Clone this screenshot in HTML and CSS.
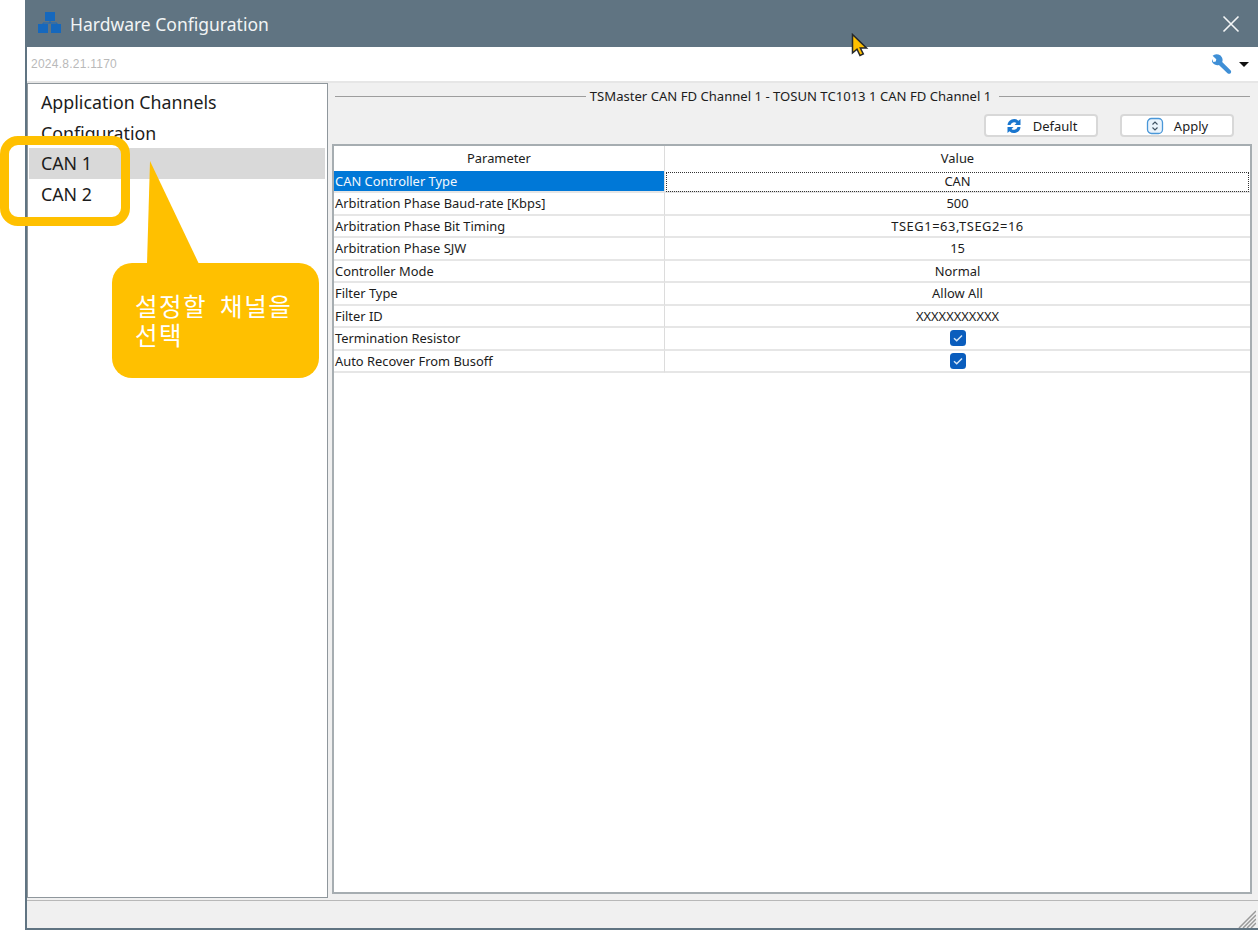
FILE: index.html
```html
<!DOCTYPE html>
<html lang="en">
<head>
<meta charset="utf-8">
<title>Hardware Configuration</title>
<link rel="stylesheet" href="styles.css">
</head>
<body>
<div class="window">
  <header class="titlebar">
    <svg class="logo" width="24" height="22" viewBox="0 0 24 22"><rect x="7" y="0" width="10" height="9" fill="#1668bd"/><rect x="0" y="12" width="10" height="9" fill="#1668bd"/><rect x="13" y="12" width="10" height="9" fill="#1668bd"/><path d="M12 8v3M5 13v-2h14v2" stroke="#1668bd" fill="none"/></svg>
    <span class="title">Hardware Configuration</span>
    <svg class="close" width="18" height="18" viewBox="0 0 18 18"><path d="M1.5 1.5l15 15M16.5 1.5l-15 15" stroke="#f4f6f7" stroke-width="1.6" fill="none"/></svg>
  </header>
  <div class="toolbar">
    <span class="version">2024.8.21.1170</span>
    <svg class="wrench" width="20" height="20" viewBox="0 0 20 20"><path d="M6.5 0.6a5.6 5.6 0 0 0-5.9 1.2l3.7 3.4-.5 2.3-2.4.5L-.2 4.6a5.6 5.6 0 0 0 7.1 6.4l8.6 8.2c.9.8 2.3.8 3.1 0 .8-.9.7-2.2-.1-3L10.200 8a5.600 5.600 0 0 0-3.700-7.400z" fill="#3f8fd6"/></svg>
    <span class="caret"></span>
  </div>
  <main class="body">
    <nav class="tree">
      <div class="tree-row">Application Channels</div>
      <div class="tree-row">Configuration</div>
      <div class="tree-row selected">CAN 1</div>
      <div class="tree-row">CAN 2</div>
    </nav>
    <section class="pane">
      <div class="group-title"><span class="rule"></span><span class="group-text">TSMaster CAN FD Channel 1 - TOSUN TC1013 1 CAN FD Channel 1</span><span class="rule"></span></div>
      <div class="actions">
        <button class="btn">
          <svg width="18" height="18" viewBox="0 0 18 18"><path d="M2.500 8A6.500 6.500 0 0 1 13.500 3.800L15.500 2v6h-6l2-1.900A3.700 3.700 0 0 0 5.500 8zM15.500 10A6.500 6.500 0 0 1 4.500 14.200L2.500 16v-6h6l-2 1.900A3.700 3.700 0 0 0 12.500 10z" fill="#1976cf"/></svg>
          Default
        </button>
        <button class="btn">
          <svg width="18" height="18" viewBox="0 0 18 18"><rect x="1.500" y="1.500" width="15" height="15" rx="4" fill="#eaf3fb" stroke="#4a97d8" stroke-width="1.300"/><path d="M6.500 7.500L9 5l2.500 2.500M6.500 10.500L9 13l2.500-2.500" fill="none" stroke="#3d4f60" stroke-width="1.100"/></svg>
          Apply
        </button>
      </div>
      <div class="grid">
        <div class="head">Parameter</div><div class="head v">Value</div>
        <div class="cell active">CAN Controller Type</div><div class="cell v focus">CAN</div>
        <div class="cell">Arbitration Phase Baud-rate [Kbps]</div><div class="cell v">500</div>
        <div class="cell">Arbitration Phase Bit Timing</div><div class="cell v wide">TSEG1=63,TSEG2=16</div>
        <div class="cell">Arbitration Phase SJW</div><div class="cell v">15</div>
        <div class="cell">Controller Mode</div><div class="cell v">Normal</div>
        <div class="cell">Filter Type</div><div class="cell v">Allow All</div>
        <div class="cell">Filter ID</div><div class="cell v">XXXXXXXXXXX</div>
        <div class="cell">Termination Resistor</div><div class="cell v"><span class="check"><svg width="16" height="16" viewBox="0 0 16 16"><rect width="16" height="16" rx="3.500" fill="#0a5dbd"/><path d="M4 8.300l2.700 2.500L12 5.500" fill="none" stroke="#d6e6f7" stroke-width="1.500"/></svg></span></div>
        <div class="cell">Auto Recover From Busoff</div><div class="cell v"><span class="check"><svg width="16" height="16" viewBox="0 0 16 16"><rect width="16" height="16" rx="3.500" fill="#0a5dbd"/><path d="M4 8.300l2.700 2.500L12 5.500" fill="none" stroke="#d6e6f7" stroke-width="1.500"/></svg></span></div>
      </div>
    </section>
  </main>
  <footer class="status">
    <svg class="grip" width="18" height="18" viewBox="0 0 18 18"><path d="M18 1L1 18M18 5L5 18M18 9L9 18M18 13L13 18" stroke="#9a9a9a" stroke-width="1.500" fill="none"/></svg>
  </footer>
</div>
<div class="ring"></div>
<div class="callout">
  <svg class="tail" width="60" height="104" viewBox="0 0 60 104"><path d="M0 103L3 0L52 103z" fill="#ffc000"/></svg>
  <p class="callout-text">설정할 채널을<br>선택</p>
</div>
<svg class="cursor" width="20" height="26" viewBox="0 0 20 26"><path d="M1.500 1.500V20l4.500-3.800 3 6.300 3.300-1.500-3-6h6.200z" fill="#ffc000" stroke="#26282b" stroke-width="1.500"/></svg>
</body>
</html>
```

FILE: styles.css
```css
* { box-sizing: border-box; }
html, body { margin: 0; padding: 0; height: 930px; overflow: hidden; background: #fff; }
body { font-family: "Noto Sans", "Noto Sans CJK KR", sans-serif; color: #1c1c1c; position: relative; }

.window { margin-left: 25px; width: 1233px; height: 930px; display: flex; flex-direction: column; border-left: 2px solid #607482; border-bottom: 2px solid #607482; background: #f0f0f0; }

.titlebar { flex: 0 0 47px; margin-left: -2px; display: flex; align-items: center; padding-left: 13px; background: #607482; color: #f2f4f5; }
.logo { flex: none; margin-top: -2px; }
.title { margin-left: 8px; font-size: 17.5px; }
.close { margin-left: auto; margin-right: 18px; }

.toolbar { flex: 0 0 36px; display: flex; align-items: center; background: #fff; padding: 0 0 0 4px; border-bottom: 2px solid #e6e6e6; }
.version { font-size: 12px; color: #b9b9b9; font-family: "Liberation Sans", sans-serif; letter-spacing: .25px; }
.wrench { margin-left: auto; }
.caret { margin: 0 9px 0 7px; border-left: 5px solid transparent; border-right: 5px solid transparent; border-top: 5px solid #111; }

.body { flex: 1; display: flex; min-height: 0; }
.tree { flex: 0 0 301px; background: #fff; border: 1px solid #8f979c; padding: 3px 2px 0 1px; }
.tree-row { height: 30.500px; line-height: 30.500px; padding-left: 12px; font-size: 17.800px; }
.tree-row.selected { background: #d9d9d9; }

.pane { flex: 1; display: flex; flex-direction: column; padding: 2px 6px 4px 0; margin-left: 4px; }
.group-title { flex: 0 0 22px; display: flex; align-items: center; gap: 4px; font-size: 13.100px; margin-left: 3px; margin-right: 2px; }
.rule { flex: 1; height: 1px; background: #9d9d9d; }
.group-text { flex: none; margin-right: 4px; }
.actions { flex: 0 0 37px; display: flex; justify-content: flex-end; gap: 22px; padding: 7px 18px 0 0; }
.btn { width: 114px; height: 23px; display: flex; align-items: center; justify-content: center; gap: 10px; padding: 0; background: #fff; border: 2px solid #d8d8d8; border-radius: 4px; font: 13px "Noto Sans", sans-serif; color: #1c1c1c; }

.grid { flex: 1; display: grid; grid-template-columns: 331px 1fr; grid-template-rows: 24.500px; grid-auto-rows: 22.500px; align-content: start; background: #fff; border: 2px solid #a6adb1; }
.head { display: flex; align-items: center; justify-content: center; font-size: 12.900px; border-right: 1px solid #dcdcdc; }
.head.v { border-right: 0; }
.cell { display: flex; align-items: center; padding-left: 1px; font-size: 12.900px; border-right: 1px solid #dcdcdc; border-bottom: 2px solid #e6e6e6; white-space: nowrap; }
.cell.v { justify-content: center; border-right: 0; padding-left: 0; }
.cell.wide { letter-spacing: .55px; }
.cell.active { background: #0078d7; color: #f2f7fc; }
.cell.focus { outline: 1px dotted #333; outline-offset: -2px; }
.check { display: flex; }

.status { flex: 0 0 28px; position: relative; border-top: 1px solid #b8b8b8; margin-top: 2px; }
.grip { position: absolute; right: 2px; bottom: 0; }

.ring { position: absolute; left: 0; top: 136px; width: 130px; height: 90px; border: 9px solid #ffc000; border-radius: 18px; }
.callout { position: absolute; left: 112px; top: 263px; width: 207px; height: 115px; background: #ffc000; border-radius: 20px; padding: 28px 0 0 23px; }
.tail { position: absolute; left: 35px; top: -102px; }
.callout-text { margin: 0; color: #fff; font-size: 24.500px; line-height: 29px; letter-spacing: 1.500px; font-family: "Noto Sans CJK KR", sans-serif; word-spacing: 6px; }
.cursor { position: absolute; left: 851px; top: 33px; }
```
